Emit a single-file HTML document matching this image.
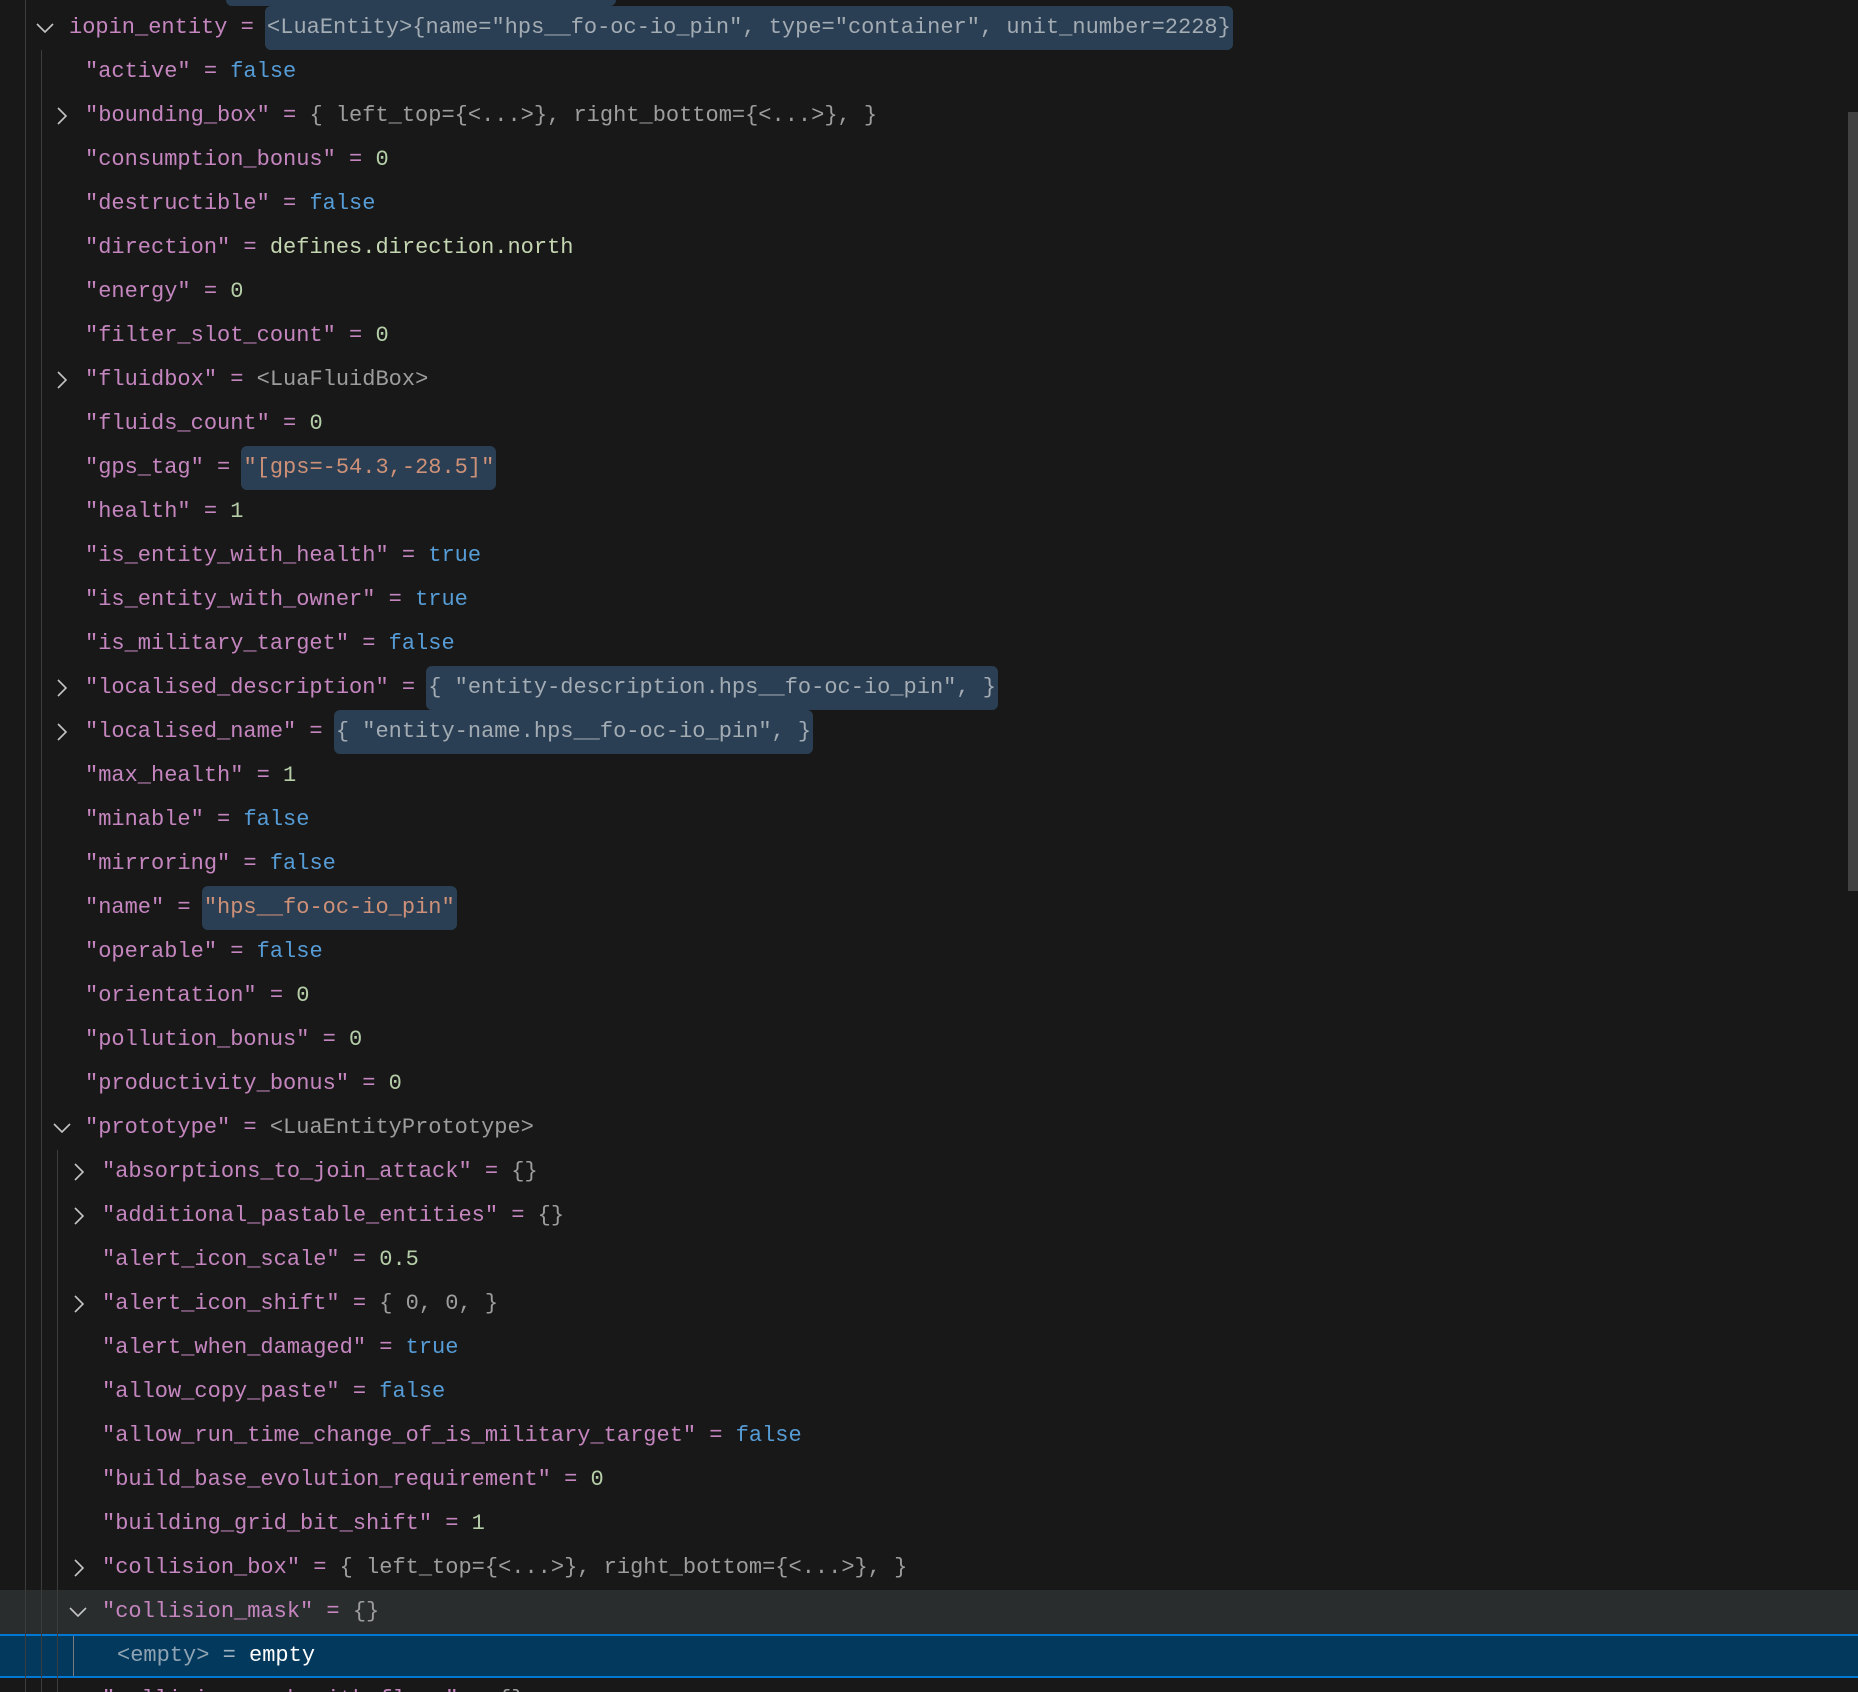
<!DOCTYPE html>
<html><head><meta charset="utf-8"><style>
html,body{margin:0;padding:0;background:#181818;width:1858px;height:1692px;overflow:hidden;position:relative}
.r{position:absolute;left:0;right:10px;height:44px;line-height:44px;font-family:"Liberation Mono",monospace;font-size:22px;color:#c586c0;white-space:pre}
.t{position:absolute;top:0}
.k{color:#c586c0}.e{color:#c586c0}.b{color:#569cd6}.n{color:#b5cea8}.s{color:#ce9178}.g{color:#9d9d9d}.d{color:#c5d6b2}
.h{background:#2a3f54;border-radius:6px;padding:0 2px;margin-left:-2px;display:inline-block;height:44px}
.h.g{color:#a3abb3}
.g1{position:absolute;width:1px;background:#3c3c3c}
svg.c{position:absolute}
</style></head><body>
<div style="position:absolute;left:226px;top:0;width:390px;height:6px;background:#2a3f54;border-radius:0 0 6px 6px"></div>
<div style="position:absolute;left:0;right:0;top:1590px;height:44px;background:#2a2d2e"></div>
<div style="position:absolute;left:0;right:0;top:1634px;height:44px;background:#04395e;border-top:2px solid #0078d4;border-bottom:2px solid #0078d4;box-sizing:border-box"></div>
<div class="g1" style="left:25px;top:0;height:1692px"></div>
<div class="g1" style="left:41px;top:50px;height:1642px"></div>
<div class="g1" style="left:57px;top:1150px;height:542px"></div>
<div class="g1" style="left:73px;top:1636px;height:40px;background:#7a7a7a"></div>
<div style="position:absolute;right:0;top:112px;width:10px;height:779px;background:#424242"></div>

<div class="r" style="top:6px"><svg class="c" style="left:36px;top:17px" width="18" height="10"><polyline points="1,1 9,9 17,1" fill="none" stroke="#c5c5c5" stroke-width="1.6"/></svg><span class="t" style="left:69px"><span class="k">iopin_entity</span> <span class="e">=</span> <span class="h g">&lt;LuaEntity&gt;{name="hps__fo-oc-io_pin", type="container", unit_number=2228}</span></span></div>
<div class="r" style="top:50px"><span class="t" style="left:85px">"active" = <span class="b">false</span></span></div>
<div class="r" style="top:94px"><svg class="c" style="left:57px;top:13px" width="10" height="18"><polyline points="1,1 9,9 1,17" fill="none" stroke="#c5c5c5" stroke-width="1.6"/></svg><span class="t" style="left:85px">"bounding_box" = <span class="g">{ left_top={&lt;...&gt;}, right_bottom={&lt;...&gt;}, }</span></span></div>
<div class="r" style="top:138px"><span class="t" style="left:85px">"consumption_bonus" = <span class="n">0</span></span></div>
<div class="r" style="top:182px"><span class="t" style="left:85px">"destructible" = <span class="b">false</span></span></div>
<div class="r" style="top:226px"><span class="t" style="left:85px">"direction" = <span class="d">defines.direction.north</span></span></div>
<div class="r" style="top:270px"><span class="t" style="left:85px">"energy" = <span class="n">0</span></span></div>
<div class="r" style="top:314px"><span class="t" style="left:85px">"filter_slot_count" = <span class="n">0</span></span></div>
<div class="r" style="top:358px"><svg class="c" style="left:57px;top:13px" width="10" height="18"><polyline points="1,1 9,9 1,17" fill="none" stroke="#c5c5c5" stroke-width="1.6"/></svg><span class="t" style="left:85px">"fluidbox" = <span class="g">&lt;LuaFluidBox&gt;</span></span></div>
<div class="r" style="top:402px"><span class="t" style="left:85px">"fluids_count" = <span class="n">0</span></span></div>
<div class="r" style="top:446px"><span class="t" style="left:85px">"gps_tag" = <span class="h s">"[gps=-54.3,-28.5]"</span></span></div>
<div class="r" style="top:490px"><span class="t" style="left:85px">"health" = <span class="n">1</span></span></div>
<div class="r" style="top:534px"><span class="t" style="left:85px">"is_entity_with_health" = <span class="b">true</span></span></div>
<div class="r" style="top:578px"><span class="t" style="left:85px">"is_entity_with_owner" = <span class="b">true</span></span></div>
<div class="r" style="top:622px"><span class="t" style="left:85px">"is_military_target" = <span class="b">false</span></span></div>
<div class="r" style="top:666px"><svg class="c" style="left:57px;top:13px" width="10" height="18"><polyline points="1,1 9,9 1,17" fill="none" stroke="#c5c5c5" stroke-width="1.6"/></svg><span class="t" style="left:85px">"localised_description" = <span class="h g">{ "entity-description.hps__fo-oc-io_pin", }</span></span></div>
<div class="r" style="top:710px"><svg class="c" style="left:57px;top:13px" width="10" height="18"><polyline points="1,1 9,9 1,17" fill="none" stroke="#c5c5c5" stroke-width="1.6"/></svg><span class="t" style="left:85px">"localised_name" = <span class="h g">{ "entity-name.hps__fo-oc-io_pin", }</span></span></div>
<div class="r" style="top:754px"><span class="t" style="left:85px">"max_health" = <span class="n">1</span></span></div>
<div class="r" style="top:798px"><span class="t" style="left:85px">"minable" = <span class="b">false</span></span></div>
<div class="r" style="top:842px"><span class="t" style="left:85px">"mirroring" = <span class="b">false</span></span></div>
<div class="r" style="top:886px"><span class="t" style="left:85px">"name" = <span class="h s">"hps__fo-oc-io_pin"</span></span></div>
<div class="r" style="top:930px"><span class="t" style="left:85px">"operable" = <span class="b">false</span></span></div>
<div class="r" style="top:974px"><span class="t" style="left:85px">"orientation" = <span class="n">0</span></span></div>
<div class="r" style="top:1018px"><span class="t" style="left:85px">"pollution_bonus" = <span class="n">0</span></span></div>
<div class="r" style="top:1062px"><span class="t" style="left:85px">"productivity_bonus" = <span class="n">0</span></span></div>
<div class="r" style="top:1106px"><svg class="c" style="left:53px;top:17px" width="18" height="10"><polyline points="1,1 9,9 17,1" fill="none" stroke="#c5c5c5" stroke-width="1.6"/></svg><span class="t" style="left:85px">"prototype" = <span class="g">&lt;LuaEntityPrototype&gt;</span></span></div>
<div class="r" style="top:1150px"><svg class="c" style="left:74px;top:13px" width="10" height="18"><polyline points="1,1 9,9 1,17" fill="none" stroke="#c5c5c5" stroke-width="1.6"/></svg><span class="t" style="left:102px">"absorptions_to_join_attack" = <span class="g">{}</span></span></div>
<div class="r" style="top:1194px"><svg class="c" style="left:74px;top:13px" width="10" height="18"><polyline points="1,1 9,9 1,17" fill="none" stroke="#c5c5c5" stroke-width="1.6"/></svg><span class="t" style="left:102px">"additional_pastable_entities" = <span class="g">{}</span></span></div>
<div class="r" style="top:1238px"><span class="t" style="left:102px">"alert_icon_scale" = <span class="n">0.5</span></span></div>
<div class="r" style="top:1282px"><svg class="c" style="left:74px;top:13px" width="10" height="18"><polyline points="1,1 9,9 1,17" fill="none" stroke="#c5c5c5" stroke-width="1.6"/></svg><span class="t" style="left:102px">"alert_icon_shift" = <span class="g">{ 0, 0, }</span></span></div>
<div class="r" style="top:1326px"><span class="t" style="left:102px">"alert_when_damaged" = <span class="b">true</span></span></div>
<div class="r" style="top:1370px"><span class="t" style="left:102px">"allow_copy_paste" = <span class="b">false</span></span></div>
<div class="r" style="top:1414px"><span class="t" style="left:102px">"allow_run_time_change_of_is_military_target" = <span class="b">false</span></span></div>
<div class="r" style="top:1458px"><span class="t" style="left:102px">"build_base_evolution_requirement" = <span class="n">0</span></span></div>
<div class="r" style="top:1502px"><span class="t" style="left:102px">"building_grid_bit_shift" = <span class="n">1</span></span></div>
<div class="r" style="top:1546px"><svg class="c" style="left:74px;top:13px" width="10" height="18"><polyline points="1,1 9,9 1,17" fill="none" stroke="#c5c5c5" stroke-width="1.6"/></svg><span class="t" style="left:102px">"collision_box" = <span class="g">{ left_top={&lt;...&gt;}, right_bottom={&lt;...&gt;}, }</span></span></div>
<div class="r" style="top:1590px"><svg class="c" style="left:69px;top:17px" width="18" height="10"><polyline points="1,1 9,9 17,1" fill="none" stroke="#c5c5c5" stroke-width="1.6"/></svg><span class="t" style="left:102px">"collision_mask" = <span class="g">{}</span></span></div>
<div class="r" style="top:1634px"><span class="t" style="left:117px"><span style="color:#8fa3b3">&lt;empty&gt;</span> <span style="color:#9fb0bf">=</span> <span style="color:#ffffff">empty</span></span></div>
<div class="r" style="top:1678px"><span class="t" style="left:102px">"collision_mask_with_flags" = <span class="g">{}</span></span></div>
</body></html>
